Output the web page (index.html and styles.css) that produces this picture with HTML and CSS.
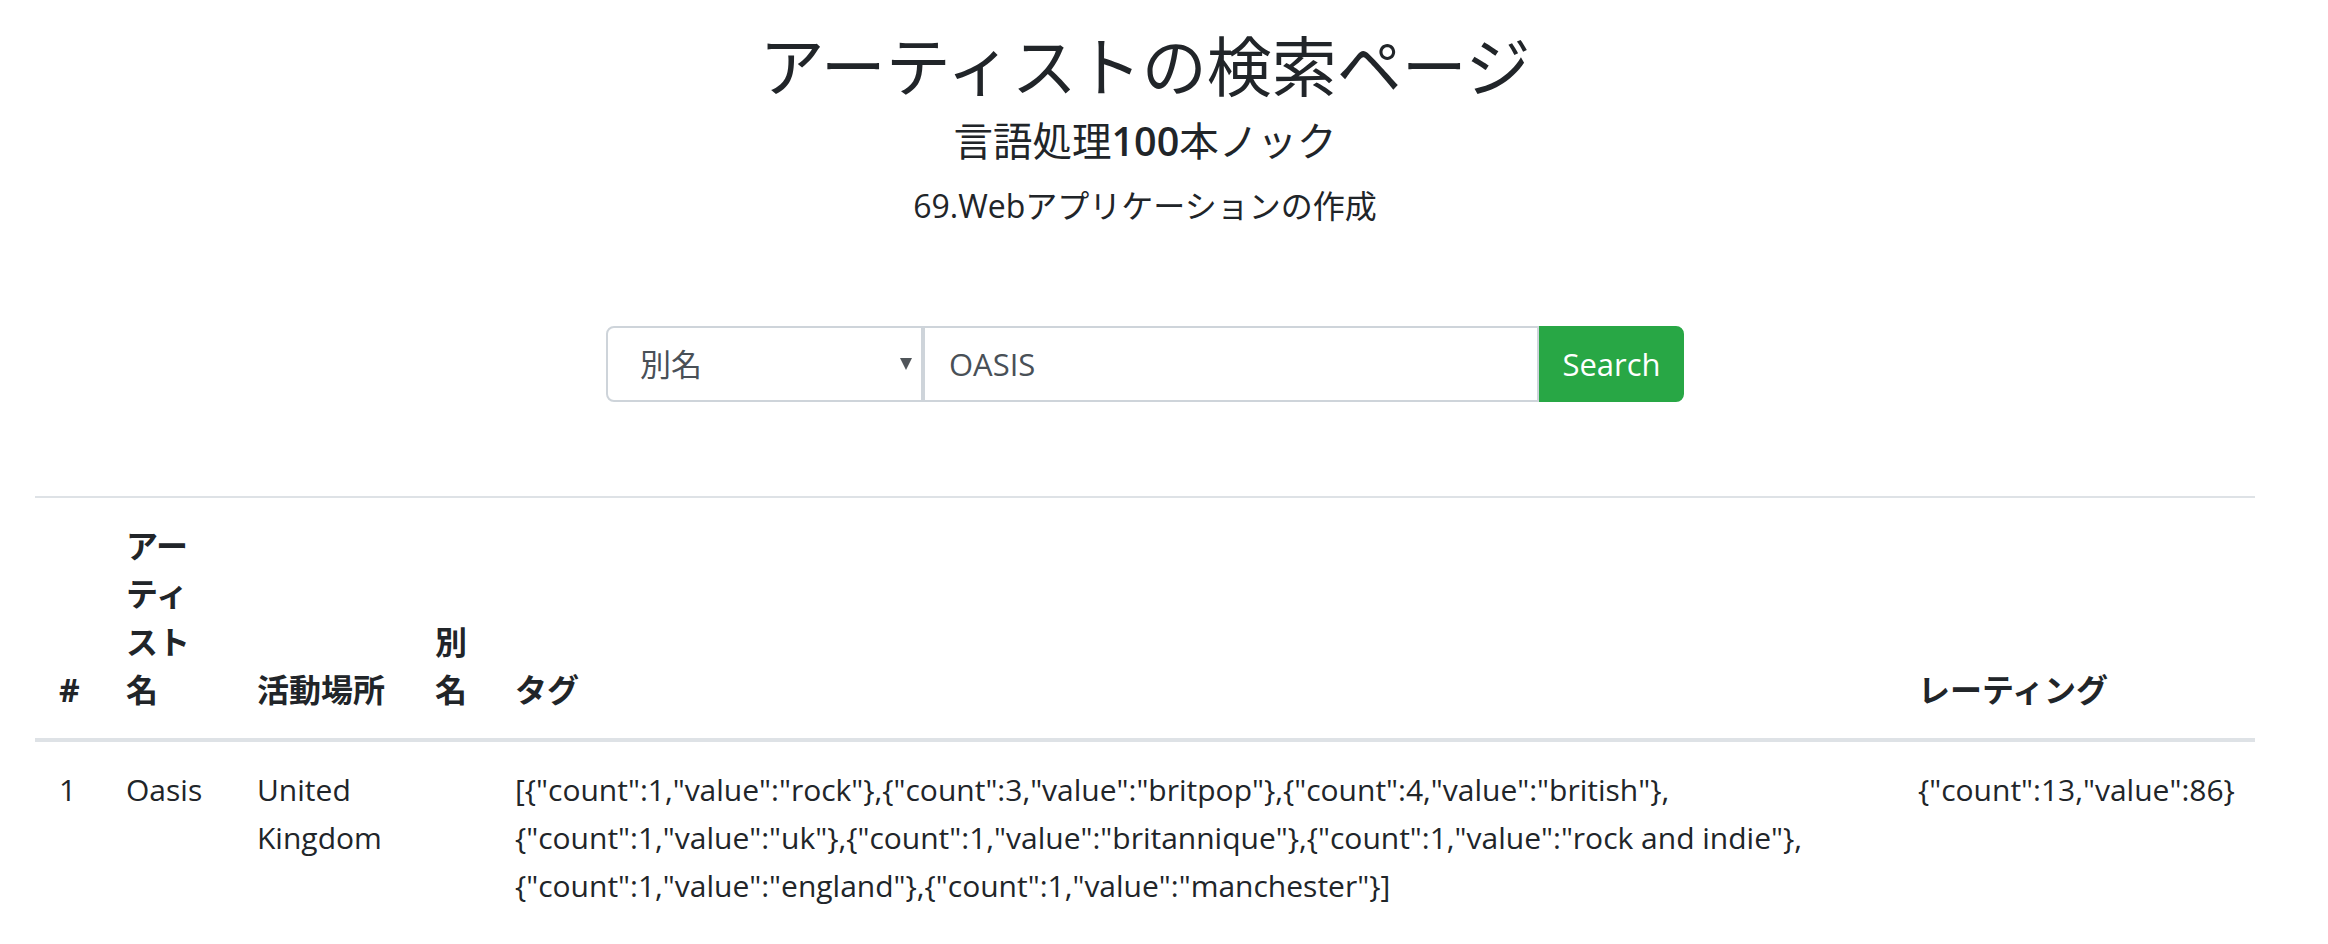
FILE: index.html
```html
<!DOCTYPE html>
<html lang="ja">
<head>
<meta charset="utf-8">
<title>アーティストの検索ページ</title>
<link rel="stylesheet" href="styles.css">
</head>
<body>
<div class="page">
  <header class="hero">
    <h1 class="title">アーティストの検索ページ</h1>
    <h2 class="subtitle">言語処理<span class="num">100</span>本ノック</h2>
    <p class="lead">69.Webアプリケーションの作成</p>
  </header>

  <form class="search">
    <div class="select-wrap">
      <select class="select">
        <option>別名</option>
      </select>
    </div>
    <input class="query" type="text" value="OASIS">
    <button class="btn" type="button">Search</button>
  </form>

  <table class="results">
    <colgroup>
      <col class="c-num">
      <col class="c-name">
      <col class="c-area">
      <col class="c-alias">
      <col class="c-tags">
      <col class="c-rating">
    </colgroup>
    <thead>
      <tr>
        <th>#</th>
        <th>アーティスト名</th>
        <th>活動場所</th>
        <th>別名</th>
        <th>タグ</th>
        <th>レーティング</th>
      </tr>
    </thead>
    <tbody>
      <tr>
        <td>1</td>
        <td>Oasis</td>
        <td>United Kingdom</td>
        <td></td>
        <td>[{"count":1,"value":"rock"},{"count":3,"value":"britpop"},{"count":4,"value":"british"},{"count":1,"value":"uk"},{"count":1,"value":"britannique"},{"count":1,"value":"rock and indie"},{"count":1,"value":"england"},{"count":1,"value":"manchester"}]</td>
        <td>{"count":13,"value":86}</td>
      </tr>
    </tbody>
  </table>
</div>
</body>
</html>
```

FILE: styles.css
```css
html, body {
  margin: 0;
  padding: 0;
  background: #ffffff;
}

body {
  font-family: "Open Sans", "Noto Sans CJK JP", sans-serif;
  color: #212529;
  font-size: 30px;
  line-height: 48px;
}

.page {
  width: 2290px;
  padding: 0 35px;
  box-sizing: border-box;
}

.hero {
  text-align: center;
  padding-top: 25px;
}

.title {
  margin: 0;
  font-size: 65px;
  line-height: 77px;
  font-weight: 400;
  font-family: "Noto Sans CJK JP", sans-serif;
}

.subtitle {
  margin: 16px 0 0;
  font-size: 39.5px;
  line-height: 46px;
  font-weight: 400;
}

.subtitle .num {
  font-weight: 600;
}

.lead {
  margin: 18px 0 0;
  font-size: 32px;
  line-height: 48px;
}

.search {
  display: flex;
  justify-content: center;
  margin: 96px 0 0;
  height: 76px;
}

.select-wrap {
  position: relative;
  width: 317px;
  height: 76px;
}

.select-wrap::after {
  content: "";
  position: absolute;
  right: 11px;
  top: 32px;
  border-left: 6px solid transparent;
  border-right: 6px solid transparent;
  border-top: 12px solid #50555a;
  pointer-events: none;
}

.select {
  appearance: none;
  -webkit-appearance: none;
  width: 100%;
  height: 100%;
  box-sizing: border-box;
  border: 2px solid #ced4da;
  border-radius: 8px 0 0 8px;
  background: #ffffff;
  color: #495057;
  font-family: "Open Sans", "Noto Sans CJK JP", sans-serif;
  font-size: 31px;
  padding: 0 30px 0 32px;
  margin: 0;
}

.query {
  width: 616px;
  height: 76px;
  box-sizing: border-box;
  border: 2px solid #ced4da;
  border-radius: 0;
  color: #495057;
  font-family: "Open Sans", "Noto Sans CJK JP", sans-serif;
  font-size: 31px;
  padding: 0 24px;
  margin: 0;
  outline: none;
}

.btn {
  width: 145px;
  height: 76px;
  box-sizing: border-box;
  border: 2px solid #28a745;
  border-radius: 0 8px 8px 0;
  background: #28a745;
  color: #ffffff;
  font-family: "Open Sans", "Noto Sans CJK JP", sans-serif;
  font-size: 31px;
  padding: 0;
  margin: 0;
}

.results {
  margin-top: 94px;
  width: 2220px;
  table-layout: fixed;
  border-collapse: collapse;
}

.c-num { width: 67px; }
.c-name { width: 131px; }
.c-area { width: 178px; }
.c-alias { width: 80px; }
.c-tags { width: 1403px; }
.c-rating { width: 361px; }

.results th,
.results td {
  padding: 24px;
  text-align: left;
  border-top: 2px solid #dee2e6;
}

.results th {
  vertical-align: bottom;
  font-size: 32px;
  font-weight: 700;
  border-bottom: 4px solid #dee2e6;
}

.results td {
  vertical-align: top;
}
```
